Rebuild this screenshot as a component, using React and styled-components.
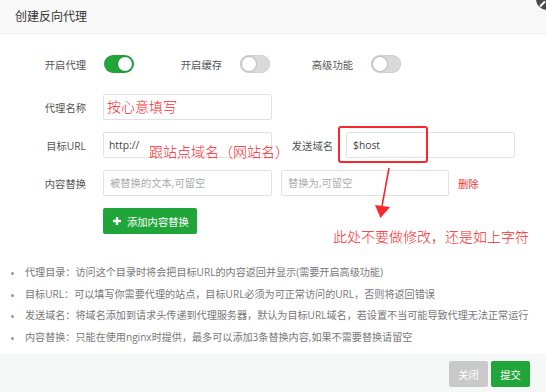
import React from 'react';
import styled, { createGlobalStyle } from 'styled-components';

const GlobalStyle = createGlobalStyle`
  html, body {
    margin: 0;
    padding: 0;
    background: #fff;
  }
  body {
    font-family: "Open Sans", "Noto Sans CJK SC", sans-serif;
    overflow: hidden;
  }
  * {
    box-sizing: border-box;
  }
`;

const RED = '#f7282e';
const GREEN = '#20a53a';

const Dialog = styled.div`
  position: relative;
  width: 546px;
  height: 392px;
  display: flex;
  flex-direction: column;
  overflow: hidden;
  background: #fff;
`;

const Header = styled.div`
  height: 34px;
  flex: none;
  padding-left: 15px;
  line-height: 33px;
  font-size: 12px;
  color: #333;
  background: #f8f8f8;
  border-bottom: 1px solid #eee;
`;

const CloseBtn = styled.span`
  position: absolute;
  left: 536px;
  top: -12px;
  width: 22px;
  height: 22px;
  border-radius: 50%;
  background: #4a4a4a;
  &::before {
    content: '';
    position: absolute;
    left: 3px;
    top: 15px;
    width: 7px;
    height: 2px;
    background: #fff;
    transform: rotate(-45deg);
  }
`;

const Body = styled.div`
  flex: 1;
  padding-top: 21px;
  display: flex;
  flex-direction: column;
  gap: 12px;
`;

const Row = styled.div`
  display: flex;
  align-items: center;
  margin-top: ${p => p.$mt || 0}px;
`;

const Label = styled.span`
  width: ${p => p.$w || 103}px;
  flex: none;
  padding-right: ${p => p.$pr || 17}px;
  text-align: right;
  font-size: 10.3px;
  color: #555;
  white-space: nowrap;
`;

const Switch = styled.span`
  position: relative;
  flex: none;
  width: 30px;
  height: 18px;
  border-radius: 9px;
  background: ${p => (p.$on ? GREEN : '#d9d9d9')};
  box-shadow: ${p => (p.$on ? 'none' : 'inset 0 0 0 1px #d0d0d0')};
  &::after {
    content: '';
    position: absolute;
    top: 2px;
    left: ${p => (p.$on ? 14 : 2)}px;
    width: 14px;
    height: 14px;
    border-radius: 50%;
    background: #fff;
    box-shadow: 0 0 1px 1px rgba(0, 0, 0, 0.12);
  }
`;

const Input = styled.input`
  flex: none;
  width: ${p => p.$w || 169}px;
  height: 26px;
  margin-left: ${p => p.$ml || 0}px;
  padding: 0 6px;
  border: 1px solid #e2e2e2;
  border-radius: 2px;
  outline: none;
  font-family: inherit;
  font-size: 10.3px;
  color: #444;
  background: #fff;
  &::placeholder {
    color: #aaa;
  }
`;

const DeleteLink = styled.span`
  margin-left: 9px;
  font-size: 10.3px;
  color: #ee3333;
`;

const AddButton = styled.button`
  margin-left: 103px;
  width: 94px;
  height: 26px;
  display: flex;
  align-items: center;
  gap: 6px;
  padding: 0 0 0 10px;
  border: none;
  border-radius: 2px;
  background: ${GREEN};
  color: #fff;
  font-family: inherit;
  font-size: 10.3px;
`;

const Tips = styled.ul`
  list-style: none;
  margin: 16px 0 0;
  padding: 0 0 0 25px;
`;

const Tip = styled.li`
  position: relative;
  height: 21.7px;
  line-height: 21.7px;
  font-size: 10.1px;
  color: #777;
  white-space: nowrap;
  &::before {
    content: '';
    position: absolute;
    left: -14px;
    top: 10px;
    width: 3px;
    height: 3px;
    border-radius: 50%;
    background: #999;
  }
`;

const Footer = styled.div`
  height: 38px;
  flex: none;
  display: flex;
  justify-content: flex-end;
  gap: 3px;
  padding: 7px 16px 0 0;
  background: #f6f8f8;
`;

const FootButton = styled.button`
  width: 39px;
  height: 26px;
  padding: 0;
  border: none;
  border-radius: 2px;
  font-family: inherit;
  font-size: 10.3px;
  color: #fff;
  background: ${p => (p.$primary ? GREEN : '#c9c9c9')};
`;

const Note = styled.span`
  position: absolute;
  left: ${p => p.$x}px;
  top: ${p => p.$y}px;
  font-size: 14px;
  line-height: 18px;
  font-weight: 300;
  color: ${RED};
  white-space: nowrap;
  pointer-events: none;
`;

const MarkBox = styled.span`
  position: absolute;
  left: 338px;
  top: 126px;
  width: 90px;
  height: 37px;
  border: 2px solid ${RED};
  border-radius: 3px;
  pointer-events: none;
`;

const Arrow = styled.svg`
  position: absolute;
  left: 366px;
  top: 162px;
  pointer-events: none;
`;

const tips = [
  '代理目录：访问这个目录时将会把目标URL的内容返回并显示(需要开启高级功能)',
  '目标URL：可以填写你需要代理的站点，目标URL必须为可正常访问的URL，否则将返回错误',
  '发送域名：将域名添加到请求头传递到代理服务器，默认为目标URL域名，若设置不当可能导致代理无法正常运行',
  '内容替换：只能在使用nginx时提供，最多可以添加3条替换内容,如果不需要替换请留空',
];

export default function App() {
  return (
    <>
      <GlobalStyle />
      <Dialog>
        <Header>创建反向代理</Header>
        <CloseBtn />
        <Body>
          <Row>
            <Label $w={104} $pr={18}>开启代理</Label>
            <Switch $on />
            <Label $w={106} $pr={18}>开启缓存</Label>
            <Switch />
            <Label $w={101} $pr={18}>高级功能</Label>
            <Switch />
          </Row>
          <Row $mt={9}>
            <Label>代理名称</Label>
            <Input defaultValue="" />
          </Row>
          <Row>
            <Label>目标URL</Label>
            <Input defaultValue="http://" style={{ paddingLeft: 5 }} />
            <Label $w={74} $pr={13}>发送域名</Label>
            <Input defaultValue="$host" />
          </Row>
          <Row>
            <Label>内容替换</Label>
            <Input placeholder="被替换的文本,可留空" />
            <Input $w={168} $ml={9} placeholder="替换为,可留空" />
            <DeleteLink>删除</DeleteLink>
          </Row>
          <Row>
            <AddButton>
              <svg width="8" height="8" viewBox="0 0 8 8">
                <rect x="2.8" y="0" width="2.4" height="8" fill="#fff" />
                <rect x="0" y="2.8" width="8" height="2.4" fill="#fff" />
              </svg>
              添加内容替换
            </AddButton>
          </Row>
          <Tips>
            {tips.map(t => (
              <Tip key={t}>{t}</Tip>
            ))}
          </Tips>
        </Body>
        <Footer>
          <FootButton>关闭</FootButton>
          <FootButton $primary>提交</FootButton>
        </Footer>

        <Note $x={107} $y={98}>按心意填写</Note>
        <Note $x={149} $y={143}>跟站点域名（网站名）</Note>
        <MarkBox />
        <Arrow width="30" height="58" viewBox="0 0 30 58">
          <line x1="23" y1="6" x2="16" y2="44" stroke={RED} strokeWidth="1.6" />
          <polygon points="9,43 24,45 14.5,56" fill={RED} />
        </Arrow>
        <Note $x={333} $y={228}>此处不要做修改，还是如上字符</Note>
      </Dialog>
    </>
  );
}
